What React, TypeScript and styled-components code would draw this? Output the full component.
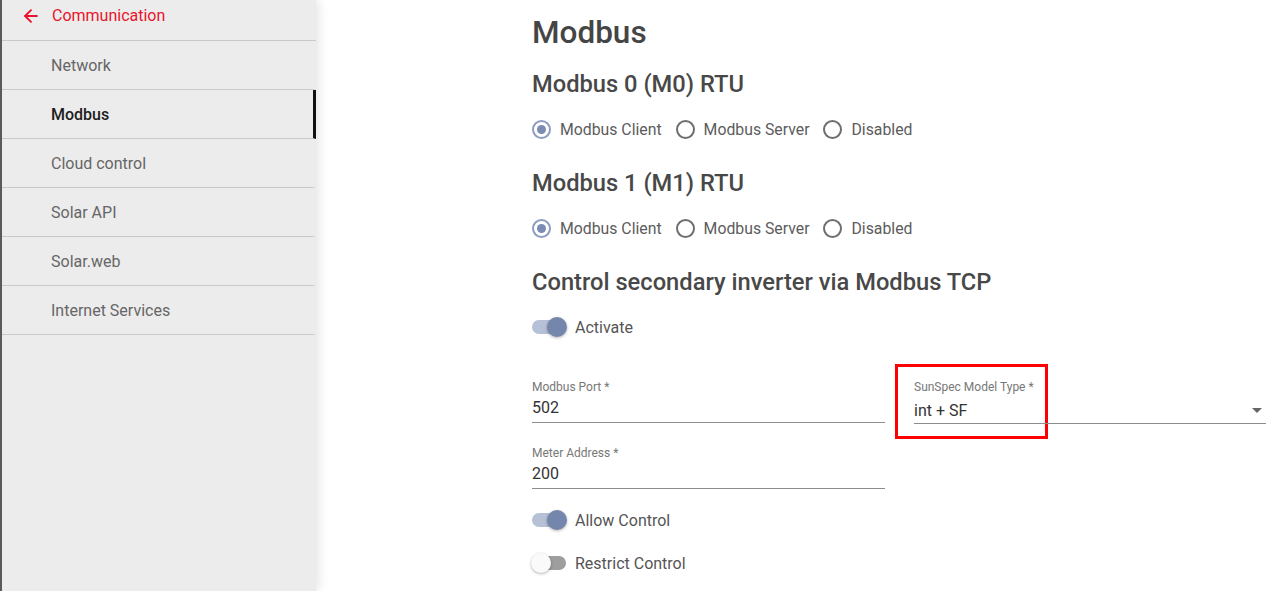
import React from 'react';
import styled, { createGlobalStyle } from 'styled-components';
import { ArrowLeft } from 'lucide-react';

const GlobalStyle = createGlobalStyle`
  html, body {
    margin: 0;
    padding: 0;
    background: #fff;
    font-family: Roboto, 'Liberation Sans', Arial, sans-serif;
  }
  * { box-sizing: border-box; }
`;

const navItems = ['Network', 'Modbus', 'Cloud control', 'Solar API', 'Solar.web', 'Internet Services'];

export default function App() {
  return (
    <>
      <GlobalStyle />
      <Page>
        <Sidebar>
          <BackHeader>
            <ArrowLeft size={20} strokeWidth={2.3} color="#e8142d" />
            <span>Communication</span>
          </BackHeader>
          {navItems.map((item) => (
            <NavItem key={item} $active={item === 'Modbus'}>
              {item}
            </NavItem>
          ))}
        </Sidebar>
        <Main>
          <Title>Modbus</Title>
          <Heading>Modbus 0 (M0) RTU</Heading>
          <RadioGroup options={['Modbus Client', 'Modbus Server', 'Disabled']} selected="Modbus Client" />
          <Heading $gap={28}>Modbus 1 (M1) RTU</Heading>
          <RadioGroup options={['Modbus Client', 'Modbus Server', 'Disabled']} selected="Modbus Client" />
          <Heading $gap={28}>Control secondary inverter via Modbus TCP</Heading>
          <Toggle label="Activate" on top={19} />
          <Fields>
            <Field>
              <FieldLabel>Modbus Port *</FieldLabel>
              <FieldValue>502</FieldValue>
            </Field>
            <Field>
              <Highlight />
              <FieldLabel>SunSpec Model Type *</FieldLabel>
              <FieldValue $select>
                int + SF
                <Caret />
              </FieldValue>
            </Field>
            <Field>
              <FieldLabel>Meter Address *</FieldLabel>
              <FieldValue>200</FieldValue>
            </Field>
          </Fields>
          <Toggle label="Allow Control" on top={19} />
          <Toggle label="Restrict Control" top={19} />
        </Main>
      </Page>
    </>
  );
}

const RadioGroup = ({ options, selected }: { options: string[]; selected: string }) => (
  <RadioRow>
    {options.map((o) => (
      <RadioOption key={o}>
        <RadioCircle $checked={o === selected} />
        {o}
      </RadioOption>
    ))}
  </RadioRow>
);

const Toggle = ({ label, on, top }: { label: string; on?: boolean; top: number }) => (
  <SwitchRow $top={top}>
    <Track $on={!!on}>
      <Thumb $on={!!on} />
    </Track>
    {label}
  </SwitchRow>
);

const Page = styled.div`
  display: flex;
  min-height: 591px;
  height: 591px;
  overflow: hidden;
`;

const Sidebar = styled.nav`
  width: 316px;
  flex-shrink: 0;
  background: #ececec;
  border-left: 2px solid #5a5a5a;
  box-shadow: 2px 0 10px rgba(0, 0, 0, 0.12);
  position: relative;
  z-index: 1;
`;

const BackHeader = styled.div`
  height: 41px;
  display: flex;
  align-items: flex-start;
  padding: 6px 0 0 19px;
  gap: 11px;
  color: #e8142d;
  font-size: 16px;
  line-height: 20px;
  border-bottom: 1px solid #c9c9c9;
`;

const NavItem = styled.div<{ $active: boolean }>`
  height: 49px;
  display: flex;
  align-items: center;
  padding-left: 49px;
  font-size: 16px;
  color: ${(p) => (p.$active ? '#1d1d1d' : '#666')};
  font-weight: ${(p) => (p.$active ? 500 : 400)};
  border-bottom: 1px solid #c9c9c9;
  border-right: 3px solid ${(p) => (p.$active ? '#111' : 'transparent')};
`;

const Main = styled.main`
  flex: 1;
  padding: 15px 14px 0 216px;
  display: flex;
  flex-direction: column;
  color: #444;
`;

const Title = styled.h1`
  margin: 0;
  font-size: 31.5px;
  line-height: 36px;
  font-weight: 500;
  color: #454545;
`;

const Heading = styled.h2<{ $gap?: number }>`
  margin: ${(p) => p.$gap ?? 19}px 0 0;
  font-size: 23.7px;
  line-height: 28px;
  font-weight: 500;
  color: #484848;
`;

const RadioRow = styled.div`
  margin-top: 19px;
  display: flex;
  gap: 14px;
  height: 24px;
  align-items: center;
`;

const RadioOption = styled.label`
  display: flex;
  align-items: center;
  gap: 9px;
  font-size: 15.8px;
  color: #5c5c5c;
`;

const RadioCircle = styled.span<{ $checked: boolean }>`
  width: 19px;
  height: 19px;
  border-radius: 50%;
  border: 2px solid ${(p) => (p.$checked ? '#8d9cc1' : '#6e6e6e')};
  display: flex;
  align-items: center;
  justify-content: center;
  &::after {
    content: '';
    width: 9px;
    height: 9px;
    border-radius: 50%;
    background: ${(p) => (p.$checked ? '#7b8bb3' : 'transparent')};
  }
`;

const SwitchRow = styled.div<{ $top: number }>`
  margin-top: ${(p) => p.$top}px;
  height: 24px;
  display: flex;
  align-items: center;
  gap: 9px;
  font-size: 16px;
  color: #555;
`;

const Track = styled.span<{ $on: boolean }>`
  position: relative;
  width: 34px;
  height: 14px;
  border-radius: 7px;
  background: ${(p) => (p.$on ? '#b6c0d6' : '#9e9e9e')};
`;

const Thumb = styled.span<{ $on: boolean }>`
  position: absolute;
  top: -3px;
  left: ${(p) => (p.$on ? '15px' : '-1px')};
  width: 20px;
  height: 20px;
  border-radius: 50%;
  background: ${(p) => (p.$on ? '#7586ad' : '#fafafa')};
  box-shadow: 0 1px 3px rgba(0, 0, 0, 0.3);
`;

const Fields = styled.div`
  margin-top: 41px;
  display: grid;
  grid-template-columns: 353px 352px;
  column-gap: 29px;
  row-gap: 22px;
`;

const Field = styled.div`
  position: relative;
  display: flex;
  flex-direction: column;
`;

const FieldLabel = styled.div`
  font-size: 12px;
  line-height: 14px;
  color: #777;
`;

const FieldValue = styled.div<{ $select?: boolean }>`
  position: relative;
  margin-top: 4px;
  padding-top: ${(p) => (p.$select ? '3px' : '0')};
  height: ${(p) => (p.$select ? '26px' : '25px')};
  font-size: 16px;
  line-height: 20px;
  color: #333;
  border-bottom: 1px solid #8c8c8c;
`;

const Caret = styled.span`
  position: absolute;
  right: 4px;
  top: 10px;
  width: 0;
  height: 0;
  border-left: 5px solid transparent;
  border-right: 5px solid transparent;
  border-top: 5px solid #666;
`;

const Highlight = styled.div`
  position: absolute;
  left: -19px;
  top: -16px;
  width: 153px;
  height: 75px;
  border: 3px solid #f00;
  pointer-events: none;
`;
